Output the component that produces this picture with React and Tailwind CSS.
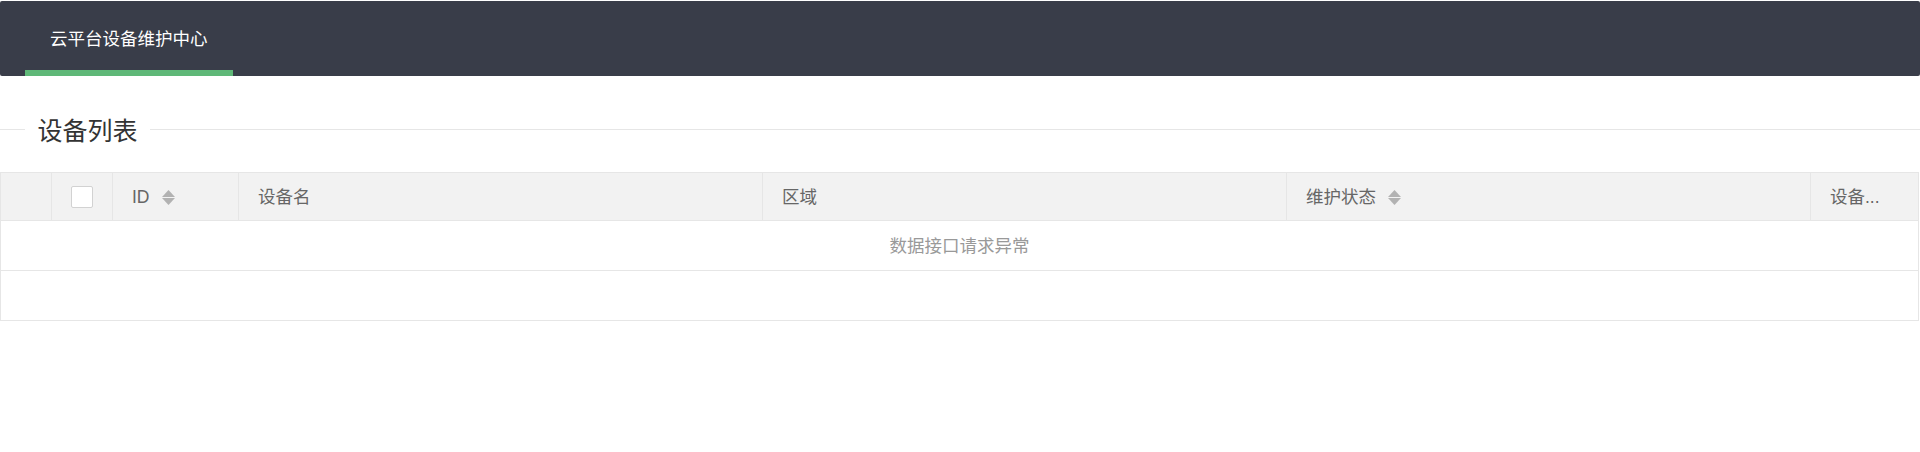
import React from 'react';

const font = { fontFamily: '"Liberation Sans", "Noto Sans CJK SC", sans-serif' };

function SortIcon() {
  return (
    <svg width="13" height="15" viewBox="0 0 13 15" className="ml-[12px] shrink-0">
      <polygon points="6.5,0 13,7 0,7" fill="#b2b2b2" />
      <polygon points="0,8 13,8 6.5,15" fill="#b2b2b2" />
    </svg>
  );
}

function HeadCell({ className = '', children }) {
  return (
    <div className={`flex items-center border-r border-[#e6e6e6] px-[19px] pt-px text-[17.5px] text-[#666] ${className}`}>
      {children}
    </div>
  );
}

export default function App() {
  return (
    <div className="min-h-[452px] bg-white pt-px" style={font}>
      {/* 顶部导航 */}
      <header className="h-[75px] rounded-[2px] bg-[#393D49]">
        <nav className="flex h-full pl-[25px]">
          <div className="relative h-full px-[25px] pt-[2px] text-[17.5px] leading-[73px] text-white">
            云平台设备维护中心
            <span className="absolute bottom-0 left-0 h-[6px] w-full bg-[#5FB878]" />
          </div>
        </nav>
      </header>

      {/* 标题 */}
      <div className="mt-[36px] flex h-[34px] items-center">
        <div className="h-px w-[25px] bg-[#e6e6e6]" />
        <span className="px-[12.5px] pt-[4px] text-[25px] leading-[30px] text-[#333]">设备列表</span>
        <div className="h-px flex-1 bg-[#e6e6e6]" />
      </div>

      {/* 表格 */}
      <div className="mt-[26px] w-[1919px] border border-[#e6e6e6]">
        <div className="flex h-[48px] border-b border-[#e6e6e6] bg-[#f2f2f2]">
          <div className="w-[51px] border-r border-[#e6e6e6]" />
          <div className="flex w-[61px] items-center justify-center border-r border-[#e6e6e6]">
            <span className="h-[22px] w-[22px] rounded-[2px] border border-[#d2d2d2] bg-white" />
          </div>
          <HeadCell className="w-[126px]">
            ID
            <SortIcon />
          </HeadCell>
          <HeadCell className="w-[524px]">设备名</HeadCell>
          <HeadCell className="w-[524px]">区域</HeadCell>
          <HeadCell className="w-[524px]">
            维护状态
            <SortIcon />
          </HeadCell>
          <div className="flex flex-1 items-center overflow-hidden px-[19px] pt-px text-[17.5px] text-[#666]">
            <span className="truncate">设备...</span>
          </div>
        </div>
        <div className="flex h-[50px] items-center justify-center border-b border-[#e6e6e6] pt-[2px] text-[17.5px] text-[#999]">
          数据接口请求异常
        </div>
        <div className="h-[49px]" />
      </div>
    </div>
  );
}
